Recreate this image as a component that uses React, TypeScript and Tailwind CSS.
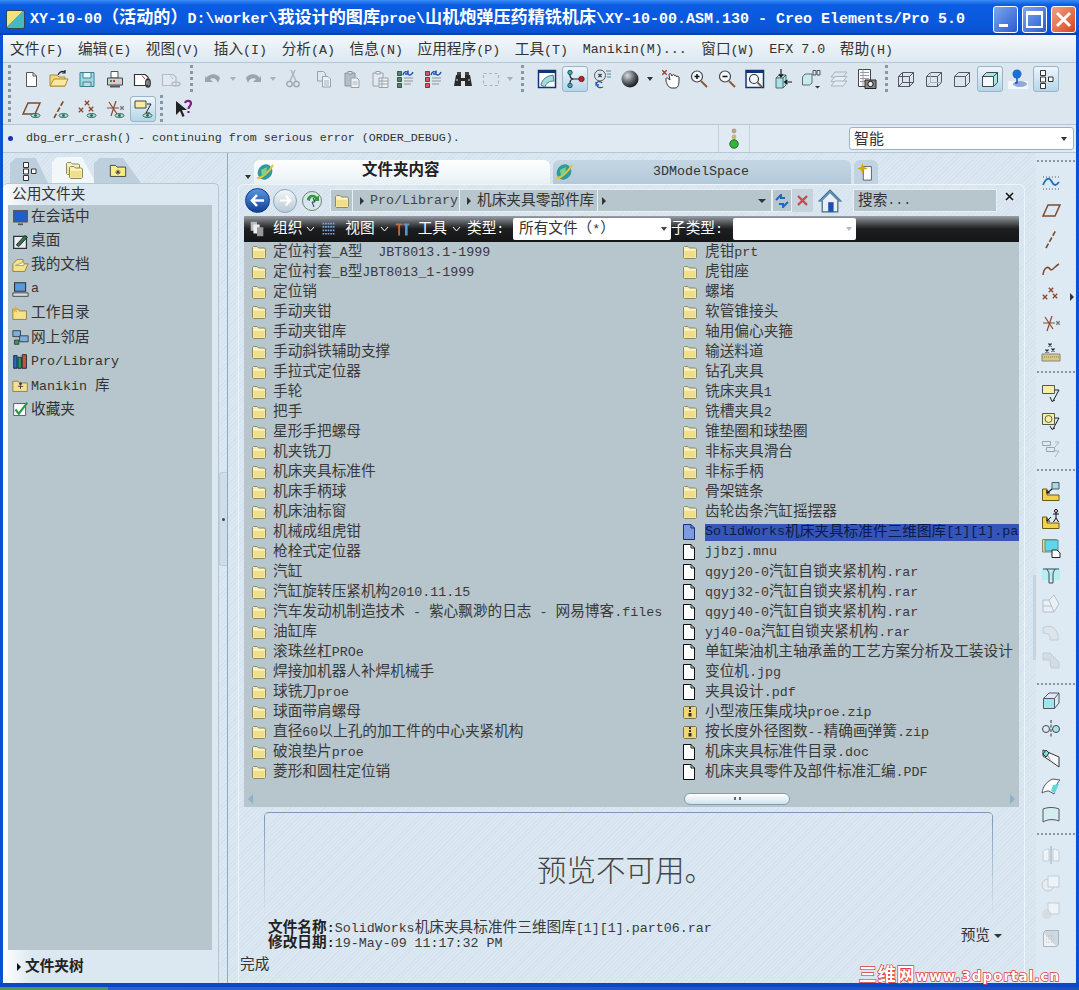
import type { ReactNode } from 'react';

const CJK = /([\u2e80-\u9fff\uff00-\uffef\u3000-\u303f]+)/;

function T({ s, big = 'text-[14.67px]' }: { s: string; big?: string }) {
  return <>{s.split(CJK).map((p, i) => (i % 2 ? <span key={i} className={big}>{p}</span> : p))}</>;
}

function Ic({ children, w = 20, h = 20 }: { children: ReactNode; w?: number; h?: number }) {
  return <svg width={w} height={h} viewBox="0 0 20 20" fill="none" className="block shrink-0">{children}</svg>;
}

const X = ({ x, y, c = '#8a4a2a', r = 2.2 }: { x: number; y: number; c?: string; r?: number }) => (
  <path d={`M${x - r} ${y - r}L${x + r} ${y + r}M${x + r} ${y - r}L${x - r} ${y + r}`} stroke={c} strokeWidth="1.3" />
);
const Eye = () => (
  <g>
    <ellipse cx="14.5" cy="16.5" rx="4.5" ry="2" fill="#bfe3d8" stroke="#2a6a5a" />
    <circle cx="14.5" cy="16.5" r="1.3" fill="#17564a" />
  </g>
);

const Folder = () => (
  <svg width="16" height="14" viewBox="0 0 16 14" className="block shrink-0">
    <path d="M1.5 12.5V2.5L2.5 1.5H6L7.5 3H13.5L14.5 4V12.5L13.5 13.5H2.5Z" fill="#f8efb4" stroke="#8b8b6a" />
    <path d="M2.5 5H13.5V12.5H2.5Z" fill="#f0de8a" />
    <path d="M2.5 5H13.5" stroke="#fffbe0" />
  </svg>
);
const Page = ({ fill = '#fff', stroke = '#111' }: { fill?: string; stroke?: string }) => (
  <svg width="14" height="16" viewBox="0 0 14 16" className="block shrink-0">
    <path d="M1.5.5H9L12.5 4V15.5H1.5Z" fill={fill} stroke={stroke} />
    <path d="M9 .5V4H12.5" fill="none" stroke={stroke} />
  </svg>
);
const Zip = () => (
  <svg width="16" height="14" viewBox="0 0 16 14" className="block shrink-0">
    <path d="M1.5 12.5V2.5L2.5 1.5H13.5L14.5 2.5V12.5L13.5 13.5H2.5Z" fill="#f2d873" stroke="#77704a" />
    <path d="M7 2H9V4H7ZM7 5H9V7H7ZM6.5 8H9.5V11.5H6.5Z" fill="#333" />
  </svg>
);

const Doc = () => <Ic><path d="M5.5 3.5H12L15.5 7V17.5H5.5Z" fill="#fff" stroke="#555" /><path d="M12 3.5V7H15.5" stroke="#555" /></Ic>;
const Open = () => <Ic><path d="M1 17V6H8L10 8H16V17Z" fill="#f2d873" stroke="#a98b3a" /><path d="M1 17L5 10H19L16 17Z" fill="#f9e9a0" stroke="#a98b3a" /><path d="M9 6C11 2 14 2 16 3M16 1V4H13" stroke="#222" strokeWidth="1.2" /></Ic>;
const Save = () => <Ic><path d="M3 3.5H17V17.5H3Z" fill="#9bdbe6" stroke="#3f7f90" /><path d="M6 3.5H14V9H6Z" fill="#eaf8fa" stroke="#3f7f90" /><path d="M6 13H14V17.5H6Z" fill="#c9d5da" stroke="#3f7f90" /></Ic>;
const Print = () => <Ic><path d="M6 2.5H13V9H6Z" fill="#fff" stroke="#555" /><path d="M2.5 9H17.5V16H2.5Z" fill="#d0d0d0" stroke="#444" /><path d="M5 17.5H15" stroke="#555" strokeWidth="2" /><path d="M5 12H7" stroke="#2a9a3a" strokeWidth="2" /><path d="M8 12H10" stroke="#c33" strokeWidth="2" /></Ic>;
const Mail = ({ off = false }: { off?: boolean }) => {
  const c = off ? '#b0bcc6' : '#333';
  return <Ic><path d="M1.5 5.5H12L15 8V16.5H1.5Z" fill={off ? '#e3e9ef' : '#fff'} stroke={c} strokeWidth="1.2" /><path d="M9 6.5L12 10" stroke={off ? c : '#c33'} /><ellipse cx="15" cy={off ? 15 : 14} rx={off ? 4 : 2.2} ry={off ? 2 : 4} fill="none" stroke={c} strokeWidth="1.5" /></Ic>;
};
const Undo = ({ flip = false }: { flip?: boolean }) => (
  <Ic><g transform={flip ? 'matrix(-1 0 0 1 20 0)' : undefined}><path d="M3 9C7 4 14 4 17 9L15 14C14 10 10 8 7 10L10 13H2V6Z" fill="#9aa4ad" /></g></Ic>
);
const Cut = () => <Ic><path d="M12 1L7 12M8 1L13 12" stroke="#aab4bd" strokeWidth="1.4" /><circle cx="6.5" cy="15" r="2.7" stroke="#9aa4ad" strokeWidth="1.3" /><circle cx="13.5" cy="15" r="2.7" stroke="#9aa4ad" strokeWidth="1.3" /></Ic>;
const Copy = () => <Ic><path d="M3.5 2.5H9.5L11.5 4.5V12H3.5Z" fill="#dfe6ec" stroke="#98a2ab" /><path d="M8.5 7.5H14L16.5 10V18H8.5Z" fill="#eef2f5" stroke="#98a2ab" /><path d="M10 12H15M10 14H15M10 16H15" stroke="#aab4bd" /></Ic>;
const Paste = () => <Ic><path d="M3 4H13V17H3Z" fill="#b4bec7" stroke="#8a949d" /><path d="M6 2.5H10V5H6Z" fill="#e3e9ef" stroke="#8a949d" /><path d="M9 9H15L17 11V18.5H9Z" fill="#eef2f5" stroke="#98a2ab" /><path d="M10.5 13H15.5M10.5 15H15.5" stroke="#aab4bd" /></Ic>;
const PasteS = () => <Ic><path d="M3 4H13V17H3Z" fill="#e3e9ef" stroke="#98a2ab" /><path d="M6 2.5H10V5H6Z" fill="#f0f4f7" stroke="#98a2ab" /><path d="M9 9H18V18.5H9ZM9 12H18M9 15H18M12 9V18.5" stroke="#98a2ab" fill="#eef2f5" /></Ic>;
const Regen = ({ c = '#3f8f6a' }: { c?: string }) => (
  <Ic>
    <path d="M2.5 2.5H6.5V6.5H2.5ZM2.5 8.5H6.5V12.5H2.5ZM2.5 14.5H6.5V18.5H2.5Z" fill={c} stroke="#333" strokeWidth=".8" />
    <path d="M9 9H18M9 12H18M9 15H16" stroke="#8a949d" />
    <path d="M8 6C9 2 12 2 13 4M13 1.5V5H10M18 3C17 6 14 7 13 5" stroke="#1d53b0" strokeWidth="1.4" />
  </Ic>
);
const Binoc = () => <Ic><path d="M3 6H8V9H12V6H17L19 17H12V12H8V17H1Z" fill="#2a2a2a" /><path d="M4 3H8V6H4ZM12 3H16V6H12Z" fill="#444" /><path d="M3 11H5M15 11H17" stroke="#ddd" /></Ic>;
const SelBox = () => <Ic><path d="M2.5 4.5H17.5V16.5H2.5Z" stroke="#aab4bd" strokeWidth="1.2" strokeDasharray="3 2.5" /></Ic>;
const Repaint = () => <Ic><path d="M1.5 1.5H18.5V18.5H1.5Z" fill="#fff" stroke="#10367a" strokeWidth="1.5" /><path d="M1.5 1.5H18.5V4H1.5Z" fill="#10367a" /><path d="M4 16C5 10 10 7 16 6L17 12C12 12 9 14 8 18Z" fill="#a7dbe2" stroke="#3f7f90" /></Ic>;
const Tree3 = () => <Ic><circle cx="5" cy="3.5" r="2.2" fill="#3bb0a0" stroke="#135" strokeWidth=".8" /><circle cx="5" cy="16.5" r="2.2" fill="#3bb0a0" stroke="#135" strokeWidth=".8" /><circle cx="16.5" cy="10" r="2.7" fill="#c8202a" stroke="#511" strokeWidth=".8" /><path d="M5 6C5 9 7 10 9 10H14M5 14C5 11 7 10 9 10" stroke="#222" strokeWidth="1.2" /></Ic>;
const Spin = () => <Ic><circle cx="7" cy="6.5" r="5.5" stroke="#555" /><X x={7} y={6.5} c="#333" r={1.6} /><path d="M13 2H18M14 5H18M14 8H18" stroke="#3f8f9f" /><path d="M3 15C4 12 8 12 9 14M3 13V16H6M10 18C8 19 5 19 4 17" stroke="#1d53b0" strokeWidth="1.3" /></Ic>;
const Sphere = () => (
  <svg width="18" height="18" viewBox="0 0 18 18" className="block shrink-0">
    <defs><radialGradient id="sph" cx="35%" cy="30%" r="75%"><stop offset="0" stopColor="#d9dde0" /><stop offset=".55" stopColor="#5d6266" /><stop offset="1" stopColor="#111" /></radialGradient></defs>
    <circle cx="9" cy="9" r="8.5" fill="url(#sph)" />
  </svg>
);
const Hand = () => <Ic><path d="M5 10V12C6 16 8 19 11 19H14C17 19 18 16 18 11V8C17 7 16 7 15.5 8C15.5 6 14 6 13.5 7C13.5 5 11.5 5 11 7L10 5C9 4 8 4.5 8 6L9 11L6.5 9C5.5 8.5 5 9 5 10Z" fill="#fff" stroke="#222" strokeWidth=".9" /><X x={3.5} y={3.5} c="#a33" /></Ic>;
const Zoom = ({ plus = false }: { plus?: boolean }) => <Ic><circle cx="8" cy="7.5" r="5.5" fill="#f4f8fb" stroke="#445" strokeWidth="1.2" /><path d="M5.5 7.5H10.5" stroke="#111" strokeWidth="1.5" />{plus && <path d="M8 5V10" stroke="#111" strokeWidth="1.5" />}<path d="M12 12L18 18" stroke="#8a5a3a" strokeWidth="2" /></Ic>;
const Refit = () => <Ic><path d="M1 1.5H18.5V18.5H1Z" fill="#f2f7fa" stroke="#10367a" strokeWidth="1.5" /><path d="M1 1.5H18.5V4H1Z" fill="#10367a" /><circle cx="9" cy="10" r="4.5" stroke="#334" strokeWidth="1.2" /><path d="M12.5 13.5L17 18" stroke="#8a5a3a" strokeWidth="1.8" /></Ic>;
const CubeArrow = () => <Ic><path d="M3 9L6 6H13V16L10 19H3Z" fill="#a8e3e6" stroke="#445" strokeWidth=".8" /><path d="M3 9H10V19M10 9L13 6" stroke="#445" strokeWidth=".8" /><path d="M8 0V7M6 5L8 8L10 5" stroke="#111" strokeWidth="1.1" /><path d="M19 13H12M14.5 11L11.5 13L14.5 15" stroke="#111" strokeWidth="1.1" /></Ic>;
const AbCube = () => <Ic><path d="M1.5 8L4 5H11V14L8.5 16H1.5Z" fill="#c7ecee" stroke="#667" /><path d="M12 1.5H15V6H12ZM16 1.5H19V6H16Z" stroke="#445" strokeWidth=".9" /><path d="M14 17H19L16.5 19.5Z" fill="#333" /></Ic>;
const Layers = () => <Ic><path d="M6 3H18L14 8H2Z" stroke="#aab4bd" /><path d="M6 7.5H18L14 12.5H2Z" fill="#e5ecf2" stroke="#aab4bd" /><path d="M6 12H18L14 17H2Z" fill="#e5ecf2" stroke="#aab4bd" /></Ic>;
const Cam = () => <Ic><path d="M1.5.5H13.5V17.5H1.5Z" fill="#fff" stroke="#445" /><path d="M3 3.5H12M3 6.5H12M3 9.5H12M3 12.5H8M6 .5V17" stroke="#99a" /><path d="M8 11H19V19.5H8Z" fill="#888" stroke="#222" /><circle cx="13.5" cy="15" r="2.7" fill="#eee" stroke="#111" /></Ic>;
const Wire = ({ v = 0 }: { v?: number }) => <Ic><path d="M2.5 7.5L6.5 3.5H17.5V13.5L13.5 17.5H2.5Z" stroke="#556" /><path d="M2.5 7.5H13.5V17.5M13.5 7.5L17.5 3.5" stroke="#556" />{v < 2 && <path d="M6.5 3.5V13.5H17.5M6.5 13.5L2.5 17.5" stroke={v === 0 ? '#556' : '#a8b2bb'} />}</Ic>;
const Shade = () => <Ic><path d="M2.5 7.5L6.5 3.5H17.5V13.5L13.5 17.5H2.5Z" fill="#a8e6e0" stroke="#445" /><path d="M2.5 7.5H13.5V17.5H2.5Z" fill="#f1fbfa" stroke="#445" /><path d="M13.5 7.5L17.5 3.5" stroke="#445" /></Ic>;
const Ball = () => <Ic><path d="M0 12H20V20H0Z" fill="#f3f7fa" /><ellipse cx="12" cy="15" rx="7" ry="3" fill="#8fa9d8" /><path d="M9 8V14H7" stroke="#1d53b0" strokeWidth="1.5" /><circle cx="9" cy="5" r="4.5" fill="#1a6fd0" /></Ic>;
const TreeNode = () => <Ic><path d="M4.5 1.5H9.5V6.5H4.5ZM4.5 8H9.5V13H4.5ZM4.5 14.5H9.5V19.5H4.5ZM12.5 8H17V12.5H12.5Z" fill="#fff" stroke="#333" /></Ic>;

const Plane = ({ eye = false }: { eye?: boolean }) => <Ic><path d="M2 15L7 4H19L14 15Z" stroke="#7d4b2a" strokeWidth="1.5" />{eye && <Eye />}</Ic>;
const Axis = ({ eye = false }: { eye?: boolean }) => <Ic><path d="M5 19L15 1" stroke="#7d4b2a" strokeWidth="1.6" strokeDasharray="5 2" />{eye && <Eye />}</Ic>;
const Pts = ({ eye = false }: { eye?: boolean }) => <Ic><X x={10} y={4} /><X x={4} y={11} /><X x={14} y={10} />{eye && <Eye />}</Ic>;
const Csys = ({ eye = false }: { eye?: boolean }) => <Ic><path d="M2 9H14M11 2L6 17M4 3L12 15" stroke="#8a4a2a" strokeWidth="1.2" /><X x={17} y={9} c="#777" r={1.7} />{eye && <Eye />}</Ic>;
const DispSel = () => <Ic><path d="M2 2H13V9H2Z" fill="#f6ee9c" stroke="#444" /><path d="M14 5H18L13 14H17" stroke="#222" /><Eye /></Ic>;
const HelpQ = () => <Ic><path d="M3 2V16L7 12L9.5 18L11.5 17L9 11H14Z" fill="#222" /><path d="M12 4C13 1 18 1 18 4.5C18 7 15.5 7 15.5 10M15.5 12V14" stroke="#7d1f80" strokeWidth="2.2" /></Ic>;

const Sketch = () => <Ic><path d="M2 4H18M2 16H18" stroke="#556" strokeDasharray="1 2" /><path d="M2 12C6 3 9 5 11 9C13 13 15 13 18 9" stroke="#1d70b8" strokeWidth="1.8" /></Ic>;
const Curve = () => <Ic><path d="M2 17C3 9 7 8 9 11C11 14 14 8 18 6" stroke="#7d4b2a" strokeWidth="1.5" /></Ic>;
const PtsDim = () => <Ic><X x={9} y={3} c="#222" r={1.5} /><X x={12} y={8} c="#222" r={1.5} /><X x={6} y={9} c="#222" r={1.5} /><path d="M1 12H19V19H1Z" fill="#d9c78a" stroke="#887" /><path d="M1 15H19" stroke="#8a7a4a" strokeDasharray="1 1" /></Ic>;
const Note1 = () => <Ic><path d="M1.5 2.5H13.5V10.5H1.5Z" fill="#f7f0a0" stroke="#555" /><path d="M14 7H18L12 18M9 14L11 18.5L14 17" stroke="#222" /></Ic>;
const Note2 = () => <Ic><path d="M1.5 2.5H13.5V13.5H1.5Z" fill="#f7f0a0" stroke="#555" /><circle cx="7.5" cy="8" r="3.5" stroke="#666" /><path d="M14 7H18L12 18M9 15L11 18.5L14 17" stroke="#222" /></Ic>;
const Note3 = () => <Ic><path d="M1.5 2.5H9.5V6.5H1.5ZM5.5 8.5H13.5V12.5H5.5Z" stroke="#9aa4ad" /><path d="M14 3H18L14 8M14 12H18L14 18" stroke="#aab4bd" /></Ic>;
const LPart = () => <Ic><path d="M1.5 8H6V14H18V19.5H1.5Z" fill="#f2d24a" stroke="#6a5a1a" /><path d="M11 1.5H18V8H11Z" fill="#a4dde0" stroke="#556" /><path d="M11 8L6 12M6 9V12H9" stroke="#111" strokeWidth="1.1" /></Ic>;
const LMan = () => <Ic><path d="M1.5 8H6V14H18V19.5H1.5Z" fill="#f2d24a" stroke="#6a5a1a" /><circle cx="15" cy="2" r="1.5" stroke="#111" /><path d="M15 3.5V9M12 5H18M15 9L12.5 13M15 9L17.5 13" stroke="#111" /><path d="M10 8L6 12M6 9V12H9" stroke="#111" /></Ic>;
const Tint = () => <Ic><path d="M1.5 1.5H15.5V14H1.5Z" fill="#f2e05a" stroke="#887" /><path d="M4 2H17V13H4Z" fill="#5dd8ea" stroke="#5a8aa0" /><path d="M11 12H16L19 15V19.5H11Z" fill="#fff" stroke="#222" /></Ic>;
const Rib = () => <Ic><path d="M1 2H19V14H1Z" fill="#b4f0f2" /><path d="M2 3H18M6 3L8 7V17H12V7L14 3" stroke="#445" /></Ic>;
const Draft = () => <Ic><path d="M2 6H8L13 1L18 10L13 18H2Z" fill="#eaf0f5" stroke="#b5c0ca" /><path d="M8 6L13 18M2 12H10" stroke="#b5c0ca" /></Ic>;
const Round = () => <Ic><path d="M2 6C8 2 15 5 17 13V18H9C10 14 8 11 2 11Z" fill="#dde5ec" stroke="#c2ccd4" /></Ic>;
const Cham = () => <Ic><path d="M2 3H9L18 12V18H10L9 10H2Z" fill="#d3dce3" stroke="#c2ccd4" /></Ic>;
const Mirror = ({ c = '#556' }: { c?: string }) => <Ic><path d="M2.5 7.5H13.5V17.5H2.5Z" fill="#9fe6ea" stroke={c} /><path d="M2.5 7.5L8 2H18V12L13.5 17.5M13.5 7.5L18 2" stroke={c} /></Ic>;
const Move = () => <Ic><circle cx="5" cy="10" r="3.5" stroke="#445" /><circle cx="15" cy="10" r="3.5" fill="#a4e6ea" stroke="#445" /><path d="M10 1V19" stroke="#333" strokeDasharray="3 1.5" /></Ic>;
const Warp = () => <Ic><path d="M2 2L18 9V19L11 14L2 8Z" fill="#f6f9fb" stroke="#333" /><path d="M2 2L7 7L11 14L6 8Z" fill="#9a9a9a" /><path d="M2 6L5 2L8 5L5 9Z" fill="#78e0e6" stroke="#333" /></Ic>;
const Surf = () => <Ic><path d="M1 17C2 10 6 5 12 3L19 4C15 8 14 13 13 18L8 15C5 15 3 16 1 17Z" fill="#fff" stroke="#556" /><path d="M12 9L18 8L14 17L10 15Z" fill="#5fd6dc" /></Ic>;
const Fill = () => <Ic><path d="M2 5C7 3 13 3 18 5V17C13 15 7 15 2 18Z" fill="#d4eef0" stroke="#556" /></Ic>;
const MirOff = () => <Ic><path d="M10 1V19" stroke="#aab4bd" strokeWidth="1.2" /><path d="M8 4C4 4 2 6 2 8V16H8ZM12 4C16 4 18 6 18 8V16H12Z" fill="#eef3f7" stroke="#c2ccd4" /></Ic>;
const Trim = () => <Ic><circle cx="7" cy="12" r="6" fill="#e5ecf2" stroke="#c2ccd4" /><path d="M7 3H18V14H7Z" fill="#eef3f7" stroke="#c2ccd4" /></Ic>;
const Ext = () => <Ic><circle cx="6" cy="14" r="5" fill="#d5dde4" /><path d="M7 3H18V14H10L7 10Z" fill="#eef3f7" stroke="#c2ccd4" /></Ic>;
const Solid = () => <Ic><path d="M2.5 4.5H15.5V18.5H2.5Z" fill="#eef3f7" stroke="#aab4bd" /><path d="M2.5 4.5L4.5 2.5H17.5V16.5L15.5 18.5" fill="#cfd8df" stroke="#aab4bd" /><path d="M5 8H13M5 11H13M5 14H13" stroke="#aab4bd" strokeDasharray="1 1.5" /></Ic>;

function Slot({ children, on = false, w = 'w-[28px]' }: { children: ReactNode; on?: boolean; w?: string }) {
  return (
    <div className={`${w} h-[28px] flex items-center justify-center shrink-0`}>
      {on
        ? <div className="w-[26px] h-[26px] flex items-center justify-center rounded-[3px] border border-[#9ab4c8] bg-linear-to-b from-[#eef5fa] to-[#b4d6ea]">{children}</div>
        : children}
    </div>
  );
}
const Caret = ({ w = 'w-[12px]', c = 'border-t-[#a8b2bb]' }: { w?: string; c?: string }) => (
  <div className={`${w} flex justify-center shrink-0`}><div className={`border-x-[3px] border-t-[4px] border-x-transparent ${c}`} /></div>
);
const Grip = ({ cls = 'mx-[5px]' }: { cls?: string }) => <div className={`w-0 h-[27px] border-l-[3px] border-dotted border-[#8698a8] shrink-0 ${cls}`} />;

const menus = ['文件(F)', '编辑(E)', '视图(V)', '插入(I)', '分析(A)', '信息(N)', '应用程序(P)', '工具(T)', 'Manikin(M)...', '窗口(W)', 'EFX 7.0', '帮助(H)'];

const leftFolders = [
  '定位衬套_A型  JBT8013.1-1999', '定位衬套_B型JBT8013_1-1999', '定位销', '手动夹钳', '手动夹钳库', '手动斜铁辅助支撑', '手拉式定位器', '手轮', '把手',
  '星形手把螺母', '机夹铣刀', '机床夹具标准件', '机床手柄球', '机床油标窗', '机械成组虎钳', '枪栓式定位器', '汽缸', '汽缸旋转压紧机构2010.11.15',
  '汽车发动机制造技术 - 紫心飘渺的日志 - 网易博客.files', '油缸库', '滚珠丝杠PROe', '焊接加机器人补焊机械手', '球铣刀proe', '球面带肩螺母',
  '直径60以上孔的加工件的中心夹紧机构', '破浪垫片proe', '菱形和圆柱定位销',
];
const rightItems: [string, 'folder' | 'file' | 'sel' | 'zip'][] = [
  ['虎钳prt', 'folder'], ['虎钳座', 'folder'], ['螺堵', 'folder'], ['软管锥接头', 'folder'], ['轴用偏心夹箍', 'folder'], ['输送料道', 'folder'], ['钻孔夹具', 'folder'],
  ['铣床夹具1', 'folder'], ['铣槽夹具2', 'folder'], ['锥垫圈和球垫圈', 'folder'], ['非标夹具滑台', 'folder'], ['非标手柄', 'folder'], ['骨架链条', 'folder'], ['齿轮齿条汽缸摇摆器', 'folder'],
  ['SolidWorks机床夹具标准件三维图库[1][1].part06.rar', 'sel'], ['jjbzj.mnu', 'file'], ['qgyj20-0汽缸自锁夹紧机构.rar', 'file'], ['qgyj32-0汽缸自锁夹紧机构.rar', 'file'], ['qgyj40-0汽缸自锁夹紧机构.rar', 'file'],
  ['yj40-0a汽缸自锁夹紧机构.rar', 'file'], ['单缸柴油机主轴承盖的工艺方案分析及工装设计', 'file'], ['变位机.jpg', 'file'], ['夹具设计.pdf', 'file'], ['小型液压集成块proe.zip', 'zip'],
  ['按长度外径图数--精确画弹簧.zip', 'zip'], ['机床夹具标准件目录.doc', 'file'], ['机床夹具零件及部件标准汇编.PDF', 'file'],
];

const MonitorI = () => <Ic w={17} h={17}><path d="M2 2H18V15H2Z" fill="#1d5fd0" stroke="#555" strokeWidth="1.5" /><path d="M7 18H13" stroke="#555" strokeWidth="2" /></Ic>;
const DesktopI = () => <Ic w={17} h={17}><path d="M2 4H17V18H2Z" fill="#eee" stroke="#234" strokeWidth="1.5" /><path d="M5 14L15 3L18 5L8 16Z" fill="#2a7a4a" stroke="#222" /></Ic>;
const DocsI = () => <Ic w={17} h={17}><path d="M1 17V8L6 3H13V8H19L15 17Z" fill="#f6e28a" stroke="#887a3a" /><path d="M4 10L14 6V10H6Z" fill="#fff" stroke="#998" /></Ic>;
const PcI = () => <Ic w={17} h={17}><path d="M3 2H16V12H3Z" fill="#5a9ad8" stroke="#333" strokeWidth="1.3" /><path d="M1 14H19V18H1Z" fill="#ddd" stroke="#333" /></Ic>;
const WorkI = () => <Ic w={17} h={17}><path d="M1 17V5H7L9 7H17V17Z" fill="#f6e28a" stroke="#887a3a" /><path d="M4 1L5 4L8 4.5L5.5 6L6 9L4 7L2 9L2.5 6L0 4.5L3 4Z" fill="#e8b020" /></Ic>;
const NetI = () => <Ic w={17} h={17}><path d="M1 2H10V9H1Z" fill="#7ab0e0" stroke="#333" /><path d="M9 8H19V15H9Z" fill="#7ab0e0" stroke="#333" /><path d="M3 13H8V18H3Z" fill="#3a9a5a" stroke="#333" /></Ic>;
const LibI = () => <Ic w={17} h={17}><path d="M2 3H6V18H2Z" fill="#2a6ac0" stroke="#123" /><path d="M7 5H11V18H7Z" fill="#2a9a5a" stroke="#123" /><path d="M12 2H17V18H12Z" fill="#d05030" stroke="#123" /></Ic>;
const ManI = () => <Ic w={17} h={17}><path d="M1 17V5H7L9 7H18V17Z" fill="#f6e28a" stroke="#887a3a" /><circle cx="10" cy="8" r="1.6" fill="#333" /><path d="M10 10V14M7 11H13" stroke="#333" /></Ic>;
const FavI = () => <Ic w={17} h={17}><path d="M2 3H16V17H2Z" fill="#fff" stroke="#446" /><path d="M4 10L8 15L18 2" stroke="#2a9a4a" strokeWidth="2.5" /></Ic>;

const sideItems: [ReactNode, string][] = [
  [<MonitorI />, '在会话中'], [<DesktopI />, '桌面'], [<DocsI />, '我的文档'], [<PcI />, 'a'], [<WorkI />, '工作目录'], [<NetI />, '网上邻居'], [<LibI />, 'Pro/Library'], [<ManI />, 'Manikin 库'], [<FavI />, '收藏夹'],
];

const Globe = () => (
  <Ic w={20} h={20}><ellipse cx="10" cy="10" rx="7" ry="8" fill="#2f9a9e" transform="rotate(35 10 10)" /><path d="M2 16C6 17 15 9 18 3" stroke="#e8c23a" strokeWidth="2" /><path d="M6 8L12 5L11 12L7 14Z" fill="#7fd08a" /></Ic>
);

const SelectBar = ({ w, text, dim = false }: { w: string; text: string; dim?: boolean }) => (
  <div className={`${w} h-[22px] bg-white rounded-[2px] flex items-center justify-between pl-[6px] pr-[4px] text-[#333] shrink-0`}>
    <span className="whitespace-pre"><T s={text} /></span>
    <div className={`border-x-[3px] border-t-[4px] border-x-transparent ${dim ? 'border-t-[#bbb]' : 'border-t-[#444]'}`} />
  </div>
);

const hatch = 'bg-[repeating-linear-gradient(135deg,#d4e2ed_0px,#d4e2ed_1px,#dbe7f1_1px,#dbe7f1_3px)]';

export default function App() {
  return (
    <div className="relative w-[1079px] h-[990px] overflow-hidden flex flex-col font-['Liberation_Mono','Noto_Sans_CJK_SC',monospace] text-[13.33px] text-[#3a3a3a] bg-[#dbe7f1]">
      {/* title bar */}
      <div className="h-[35px] shrink-0 flex items-center pt-[5px] pl-[6px] pr-[3px] border-b-2 border-[#0a3fb5] bg-[linear-gradient(180deg,#3a8cf5_0px,#0a5ce2_5px,#0a58dc_24px,#0a4fd0_100%)]">
        <div className="w-[19px] h-[19px] mr-[5px] rounded-[2px] border border-[#345] bg-[linear-gradient(135deg,#f5e27a_45%,#46b9c0_46%)] shrink-0" />
        <div className="whitespace-pre text-white font-bold text-[15px]">
          <T s="XY-10-00（活动的）D:\worker\我设计的图库proe\山机炮弹压药精铣机床\XY-10-00.ASM.130 - Creo Elements/Pro 5.0" big="text-[17.1px]" />
        </div>
        <div className="ml-auto flex gap-[4px]">
          <div className="w-[25px] h-[27px] rounded-[3px] border border-white bg-linear-to-br from-[#7ea5ee] to-[#2a5bd0] flex items-end pl-[5px] pb-[5px]"><div className="w-[9px] h-[3px] bg-white" /></div>
          <div className="w-[25px] h-[27px] rounded-[3px] border border-white bg-linear-to-br from-[#7ea5ee] to-[#2a5bd0] flex items-center justify-center"><div className="w-[17px] h-[17px] border-2 border-t-[4px] border-white" /></div>
          <div className="w-[25px] h-[27px] rounded-[3px] border border-white bg-linear-to-br from-[#f0a080] to-[#d8401c] flex items-center justify-center">
            <svg width="17" height="17" viewBox="0 0 17 17"><path d="M2 2L15 15M15 2L2 15" stroke="#fff" strokeWidth="3" /></svg>
          </div>
        </div>
      </div>

      <div className="flex-1 min-h-0 flex flex-col border-x-[3px] border-[#0c50d4]">
        {/* menu */}
        <div className="h-[28px] shrink-0 flex items-center pt-[3px] pl-[7px] gap-[14.6px] border-b border-[#b5c7d6] bg-linear-to-b from-[#f4f8fb] to-[#dce8f1] text-[#333]">
          {menus.map(m => <span key={m} className="whitespace-pre"><T s={m} /></span>)}
        </div>

        {/* toolbars */}
        <div className="h-[62px] shrink-0 flex flex-col justify-center border-b border-[#b5c7d6] bg-[#dbe6ef]">
          <div className="h-[30px] flex items-center">
            <Grip cls="ml-[5px] mr-[6px]" />
            <Slot><Doc /></Slot><Slot><Open /></Slot><Slot><Save /></Slot><Slot><Print /></Slot><Slot><Mail /></Slot><Slot><Mail off /></Slot>
            <Grip cls="ml-[5px] mr-[6px]" />
            <Slot><Undo /></Slot><Caret /><Slot><Undo flip /></Slot><Caret />
            <Slot><Cut /></Slot><div className="w-[3px] shrink-0" /><Slot><Copy /></Slot><Slot><Paste /></Slot><Slot><PasteS /></Slot>
            <Slot w="w-[28px] -ml-[3px]"><Regen /></Slot><Slot><Regen c="#d05a5a" /></Slot><Slot w="w-[28px] ml-[2px]"><Binoc /></Slot>
            <Slot><SelBox /></Slot><Caret w="w-[10px]" />
            <Grip cls="ml-[6px] mr-[9px]" />
            <Slot><Repaint /></Slot><Slot on><Tree3 /></Slot><Slot><Spin /></Slot>
            <Slot w="w-[26px]"><Sphere /></Slot><Caret w="w-[14px]" c="border-t-[#333]" />
            <Slot><Hand /></Slot><Slot><Zoom plus /></Slot><Slot><Zoom /></Slot><Slot><Refit /></Slot><Slot><CubeArrow /></Slot><Slot><AbCube /></Slot><Slot><Layers /></Slot><Slot><Cam /></Slot>
            <Grip cls="mx-[4px]" />
            <Slot><Wire /></Slot><Slot><Wire v={1} /></Slot><Slot><Wire v={2} /></Slot><Slot on><Shade /></Slot><Slot><Ball /></Slot><Slot on><TreeNode /></Slot>
          </div>
          <div className="h-[30px] flex items-center">
            <Grip cls="ml-[5px] mr-[6px]" />
            <Slot><Plane eye /></Slot><Slot><Axis eye /></Slot><Slot><Pts eye /></Slot><Slot><Csys eye /></Slot><Slot on><DispSel /></Slot>
            <Grip cls="ml-[3px] mr-[6px]" />
            <Slot><HelpQ /></Slot>
          </div>
        </div>

        {/* message area */}
        <div className="h-[28px] shrink-0 flex items-center border-b border-[#b5c7d6] bg-[#e0eaf2]">
          <div className="w-[5px] h-[5px] ml-[5px] rounded-full bg-[#1a2fb8] shrink-0" />
          <div className="ml-[13px] w-[692px] whitespace-pre text-[11.67px] text-[#333]">dbg_err_crash() - continuing from serious error (ORDER_DEBUG).</div>
          <div className="w-[32px] self-stretch border-x border-[#c2d1dd] flex items-center justify-center">
            <svg width="10" height="24" viewBox="0 0 10 24"><circle cx="5" cy="4" r="2.4" fill="#bba08a" /><circle cx="5" cy="10" r="2.4" fill="#c9b77a" /><circle cx="5" cy="17" r="4.2" fill="#35b53a" stroke="#1c6a22" /></svg>
          </div>
          <div className="ml-[99px] w-[225px] h-[23px] bg-white border border-[#9fb2c2] rounded-[3px] flex items-center justify-between pl-[4px] pr-[6px]">
            <span className="text-[15px] text-[#333] font-['Noto_Sans_CJK_SC',sans-serif]">智能</span>
            <div className="border-x-[3px] border-t-[4px] border-x-transparent border-t-[#333]" />
          </div>
        </div>

        {/* main */}
        <div className={`flex-1 min-h-0 flex ${hatch}`}>
          {/* left pane */}
          <div className="w-[216px] shrink-0 flex flex-col">
            <div className="h-[30px] shrink-0 flex items-end pl-[7px]">
              <div className="w-[38px] h-[25px] mr-[4px] bg-[#bdcfdd] flex items-center justify-center [clip-path:polygon(0_100%,0_20%,15%_0,68%_0,100%_100%)]"><TreeNode /></div>
              <div className="w-[44px] h-[26px] bg-[#f2f7fa] flex items-center justify-center [clip-path:polygon(0_100%,0_20%,12%_0,68%_0,100%_100%)]">
                <div className="relative w-[18px] h-[18px]"><div className="absolute left-0 top-0"><Folder /></div><div className="absolute left-[3px] top-[4px]"><Folder /></div></div>
              </div>
              <div className="w-[47px] h-[25px] -ml-[2px] bg-[#bdcfdd] flex items-center justify-center [clip-path:polygon(0_100%,0_20%,12%_0,62%_0,100%_100%)]">
                <Ic w={18} h={17}><path d="M1 17V4H7L9 6H19V17Z" fill="#f7ec8a" stroke="#333" /><path d="M10 9V15M7 12H13M8 10L12 14M12 10L8 14" stroke="#333" /></Ic>
              </div>
            </div>
            <div className="flex-1 min-h-0 flex flex-col rounded-t-[5px] border-t border-r border-[#b5c7d6] bg-[linear-gradient(90deg,#fff_0px,#dbe7f1_30px)] pl-[5px] pr-[6px]">
              <div className="h-[21px] shrink-0 flex items-center pl-[4px] text-[#333]"><T s="公用文件夹" /></div>
              <div className="h-[745px] shrink-0 bg-[#b7c5cc]">
                {sideItems.map(([icon, label]) => (
                  <div key={label} className="h-[24.1px] flex items-center pl-[4px] gap-[2px]">
                    {icon}
                    <span className="whitespace-pre text-[#333]"><T s={label} /></span>
                  </div>
                ))}
              </div>
              <div className="flex-1 flex items-center pl-[9px] gap-[4px] font-bold text-[#222]">
                <div className="border-y-[4px] border-l-[4px] border-y-transparent border-l-[#111]" />
                <T s="文件夹树" />
              </div>
            </div>
          </div>

          {/* splitter */}
          <div className="w-[9px] shrink-0 pt-[319px] border-r border-[#93a8ba]">
            <div className="h-[94px] w-[8px] rounded-l-[3px] bg-[#cfdde8] border border-r-0 border-[#bccedc] flex items-center justify-center">
              <div className="w-[3px] h-[3px] rounded-full bg-[#445]" />
            </div>
          </div>

          {/* right pane */}
          <div className="w-[805px] shrink-0 flex flex-col">
            <div className="h-[31px] shrink-0 flex items-end">
              <div className="ml-[13px] w-[13px] flex justify-center mb-[5px]"><div className="border-x-[3px] border-t-[4px] border-x-transparent border-t-[#333]" /></div>
              <div className="w-[296px] h-[24px] rounded-t-[6px] bg-linear-to-b from-white to-[#e8f0f5] flex items-center">
                <div className="ml-[1px]"><Globe /></div>
                <span className="ml-[87px] font-bold text-[#222] text-[15.5px]">文件夹内容</span>
              </div>
              <div className="ml-[3px] w-[298px] h-[24px] rounded-t-[6px] bg-linear-to-b from-[#c4d6e3] to-[#b3c9d9] flex items-center">
                <div className="ml-[1px]"><Globe /></div>
                <span className="ml-[79px] text-[#333]">3DModelSpace</span>
              </div>
              <div className="ml-[3px] w-[24px] h-[24px] rounded-t-[6px] bg-[#c0d3e0] flex items-center justify-center">
                <Ic w={18} h={18}><path d="M7 4H16V19H7Z" fill="#fff" stroke="#556" /><path d="M6 0L7.5 4.5L12 6L7.5 7.5L6 12L4.5 7.5L0 6L4.5 4.5Z" fill="#d8a800" /></Ic>
              </div>
            </div>

            <div className="flex-1 min-h-0 ml-[10px] mr-[8px] pl-[5px] pr-[6px] rounded-t-[6px] border-t border-x border-[#eef4f8] flex flex-col">
              {/* nav row */}
              <div className="h-[31px] shrink-0 flex items-center relative">
                <div className="ml-[1px] w-[25px] h-[25px] rounded-full bg-linear-to-b from-[#5a96e0] to-[#0f3f96] border border-[#123a80] flex items-center justify-center">
                  <svg width="15" height="13" viewBox="0 0 15 13"><path d="M7 1L2 6.5L7 12M2 6.5H14" fill="none" stroke="#fff" strokeWidth="2.6" /></svg>
                </div>
                <div className="ml-[3px] w-[24px] h-[24px] rounded-full bg-linear-to-b from-[#f2f6f9] to-[#b9cad7] border border-[#8fa4b5] flex items-center justify-center">
                  <svg width="13" height="11" viewBox="0 0 15 13"><path d="M8 1L13 6.5L8 12M13 6.5H1" fill="none" stroke="#fff" strokeWidth="2.6" /></svg>
                </div>
                <div className="ml-[5px] w-[20px] h-[20px] rounded-full bg-[#d9e5ee] border border-[#6a8a6a] flex items-center justify-center">
                  <svg width="17" height="17" viewBox="0 0 17 17"><path d="M3 8C3 3 10 1 13 5L15 3V9H9L11 7C9 4 6 5 6 9Z" fill="#2e9a3a" /><path d="M9 6L11 10H8L10 15" stroke="#335" fill="none" /></svg>
                </div>
                <div className="ml-[8px] w-[442px] h-[23px] bg-[#b7c5cc] border border-[#e8f0f5] flex items-center">
                  <div className="w-[22px] h-full border-r border-[#e8f0f5] flex items-center justify-center"><Folder /></div>
                  <div className="w-[17px] flex justify-center"><div className="border-y-[4px] border-l-[4px] border-y-transparent border-l-[#333]" /></div>
                  <div className="w-[90px] h-full border-r border-[#e8f0f5] flex items-center text-[#444]">Pro/Library</div>
                  <div className="w-[17px] flex justify-center"><div className="border-y-[4px] border-l-[4px] border-y-transparent border-l-[#333]" /></div>
                  <div className="w-[121px] h-full border-r border-[#e8f0f5] flex items-center text-[14.67px] whitespace-pre text-[#333]">机床夹具零部件库</div>
                  <div className="w-[12px] flex justify-center"><div className="border-y-[4px] border-l-[4px] border-y-transparent border-l-[#333]" /></div>
                  <div className="ml-auto mr-[5px] border-x-[4px] border-t-[4px] border-x-transparent border-t-[#333]" />
                </div>
                <div className="w-[20px] h-[23px] bg-[#b7c5cc] border border-[#e8f0f5] flex items-center justify-center">
                  <svg width="14" height="14" viewBox="0 0 14 14"><path d="M1 6L6 1V4H10M13 8L8 13V10H4" stroke="#1d6ac0" strokeWidth="2" fill="none" /></svg>
                </div>
                <div className="w-[21px] h-[23px] bg-[#c5d3dc] flex items-center justify-center">
                  <svg width="13" height="13" viewBox="0 0 13 13"><path d="M2 2L11 11M11 2L2 11" stroke="#c84a4a" strokeWidth="2.4" /></svg>
                </div>
                <div className="ml-[5px]">
                  <Ic w={24} h={24}><path d="M10 1L1 10H3.5V19H16.5V10H19Z" fill="#e9eef2" stroke="#3a6a8a" /><path d="M10 1L1 10H3.5L10 3.5L16.5 10H19Z" fill="#5a8ab8" /><path d="M8.5 11H13V19H8.5Z" fill="#1d4fb0" /></Ic>
                </div>
                <div className="ml-[11px] w-[144px] h-[23px] bg-[#b7c5cc] border border-[#e8f0f5] flex items-center pl-[4px] text-[#333] whitespace-pre"><T s="搜索..." /></div>
                <svg width="9" height="9" viewBox="0 0 9 9" className="ml-[8px] mb-[8px]"><path d="M1 1L8 8M8 1L1 8" stroke="#111" strokeWidth="1.5" /></svg>
              </div>

              {/* black command bar */}
              <div className="h-[26px] shrink-0 w-[775px] flex items-center text-white bg-linear-to-b from-[#9aa0a6] via-[#1c1e20] via-50% to-[#141516] pl-[3px]">
                <Ic w={20} h={18}><path d="M3 2H10V12H3Z" fill="#bbb" /><path d="M6 5H13V15H6Z" fill="#eee" /><path d="M10 8H17V18H10Z" fill="#999" /></Ic>
                <span className="ml-[6px] whitespace-pre"><T s="组织" /></span>
                <svg width="9" height="6" viewBox="0 0 9 6" className="ml-[4px]"><path d="M1 1L4.5 5L8 1" stroke="#fff" fill="none" /></svg>
                <div className="ml-[5px]"><Ic w={17} h={17}><path d="M3 3H17M3 7H17M3 11H17M3 15H17" stroke="#7ea5e0" strokeWidth="2" strokeDasharray="2 1" /></Ic></div>
                <span className="ml-[8px] whitespace-pre"><T s="视图" /></span>
                <svg width="9" height="6" viewBox="0 0 9 6" className="ml-[5px]"><path d="M1 1L4.5 5L8 1" stroke="#fff" fill="none" /></svg>
                <div className="ml-[5px]"><Ic w={17} h={17}><path d="M2 3H10V5H7V17H5V5H2Z" fill="#c8703a" /><path d="M11 3H18V5H16V17H13V5H11Z" fill="#5a9ac8" /></Ic></div>
                <span className="ml-[7px] whitespace-pre"><T s="工具" /></span>
                <svg width="9" height="6" viewBox="0 0 9 6" className="ml-[5px]"><path d="M1 1L4.5 5L8 1" stroke="#fff" fill="none" /></svg>
                <span className="ml-[6px] w-[37px] whitespace-pre"><T s="类型:" /></span>
                <div className="ml-[9px]"><SelectBar w="w-[158px]" text="所有文件（*）" /></div>
                <span className="ml-[0px] w-[52px] whitespace-pre"><T s="子类型:" /></span>
                <div className="ml-[10px]"><SelectBar w="w-[123px]" text="" dim /></div>
              </div>

              {/* file list */}
              <div className="h-[565px] shrink-0 w-[775px] bg-[#b7c5cc] flex flex-col overflow-hidden">
                <div className="h-[548px] grid grid-cols-[431px_344px] grid-rows-[repeat(27,20px)] grid-flow-col text-[#3a3a3a]">
                  {leftFolders.map(f => (
                    <div key={f} className="flex items-center pl-[7px] gap-[6px] min-w-0">
                      <Folder />
                      <span className="whitespace-pre"><T s={f} /></span>
                    </div>
                  ))}
                  {rightItems.map(([f, k]) => (
                    <div key={f} className="flex items-center pl-[7px] min-w-0 overflow-hidden">
                      <div className="w-[23px] shrink-0">
                        {k === 'folder' && <Folder />}
                        {k === 'file' && <Page />}
                        {k === 'sel' && <Page fill="#7e9ae0" stroke="#1a2f80" />}
                        {k === 'zip' && <Zip />}
                      </div>
                      <span className={k === 'sel' ? 'whitespace-pre flex-1 bg-[#3556b8] text-[#0d1a4a] h-[17px] flex items-center overflow-hidden' : 'whitespace-pre'}>
                        <T s={f} />
                      </span>
                    </div>
                  ))}
                </div>
                <div className="h-[17px] flex items-center px-[4px]">
                  <div className="border-y-[5px] border-r-[5px] border-y-transparent border-r-[#8fb0cc]" />
                  <div className="ml-[431px] w-[106px] h-[12px] rounded-full border border-[#7f9db5] bg-linear-to-b from-white to-[#d0e2ee] flex items-center justify-center">
                    <div className="w-[7px] h-[3px] border-x-2 border-[#667]" />
                  </div>
                  <div className="ml-auto border-y-[5px] border-l-[5px] border-y-transparent border-l-[#8fb0cc]" />
                </div>
              </div>

              {/* preview */}
              <div className="mt-[5px] ml-[20px] w-[729px] h-[104px] shrink-0 rounded-t-[5px] border-t border-[#7e97b5] bg-[linear-gradient(#7e97b5,transparent),linear-gradient(#7e97b5,transparent)] bg-[length:1px_100%] bg-[position:left_top,right_top] bg-no-repeat flex items-center justify-center">
                <span className="text-[29.5px] -ml-[6px] text-[#444] font-['Noto_Sans_CJK_SC',sans-serif] font-light mt-[8px]">预览不可用。</span>
              </div>
              <div className="h-[33px] shrink-0 ml-[24px] flex items-center w-[735px] mt-[3px]">
                <div className="leading-[15px]">
                  <div className="whitespace-pre h-[15px]"><span className="font-bold text-[#222]"><T s="文件名称:" /></span><T s="SolidWorks机床夹具标准件三维图库[1][1].part06.rar" /></div>
                  <div className="whitespace-pre h-[15px]"><span className="font-bold text-[#222]"><T s="修改日期:" /></span>19-May-09 11:17:32 PM</div>
                </div>
                <span className="ml-auto text-[14.67px] text-[#333]">预览</span>
                <div className="ml-[4px] mr-[1px] border-x-[4px] border-t-[4px] border-x-transparent border-t-[#333]" />
              </div>
              <div className="h-[18px] shrink-0 -ml-[4px] mt-[4px] flex items-center text-[14.67px] text-[#333]">完成</div>
            </div>
          </div>

          {/* right icon strip */}
          <div className="flex-1 flex">
            <div className="w-[3px] shrink-0 self-stretch pt-[422px]"><div className="h-[85px] w-[3px] bg-[#c4d4e0]" /></div>
            <div className="w-[39px] shrink-0 bg-[#dde9f3] flex flex-col items-center pt-[7px]">
              <div className="w-[38px] border-t-2 border-dotted border-[#8698a8] h-[13px]" />
              <div className="flex flex-col items-center gap-[8.2px] -ml-[9px]">
                <Sketch /><Plane /><Axis /><Curve />
                <div className="relative"><Pts /><div className="absolute left-[29px] top-[7px] border-y-[4px] border-l-[4px] border-y-transparent border-l-[#333]" /></div>
                <Csys /><PtsDim />
              </div>
              <div className="w-[38px] border-t-2 border-dotted border-[#8698a8] mt-[9px] mb-[10px]" />
              <div className="flex flex-col items-center gap-[8px] -ml-[9px]"><Note1 /><Note2 /><Note3 /></div>
              <div className="w-[38px] border-t-2 border-dotted border-[#8698a8] mt-[10px] mb-[10px]" />
              <div className="flex flex-col items-center gap-[8.2px] -ml-[9px]"><LPart /><LMan /><Tint /><Rib /><Draft /><Round /><Cham /></div>
              <div className="w-[38px] border-t-2 border-dotted border-[#8698a8] mt-[13px] mb-[6px]" />
              <div className="flex flex-col items-center gap-[8.2px] -ml-[9px]"><Mirror /><Move /><Warp /><Surf /><Fill /></div>
              <div className="w-[38px] border-t-2 border-dotted border-[#8698a8] mt-[9px] mb-[10px]" />
              <div className="flex flex-col items-center gap-[7.6px] -ml-[9px]"><MirOff /><Trim /><Ext /><Solid /></div>
            </div>
          </div>
        </div>
      </div>

      {/* bottom frame edge */}
      <div className="h-[7px] shrink-0 flex flex-col">
        <div className="h-[4px] bg-[#0c47c8]" />
        <div className="h-[3px] flex"><div className="w-[108px] bg-[#4a9a52]" /><div className="flex-1 bg-linear-to-r from-[#2a62d0] to-[#1a4fc0]" /></div>
      </div>

      {/* site watermark stamped on the picture */}
      <div className="absolute right-[19px] bottom-[7px] whitespace-pre font-['DejaVu_Sans','Noto_Sans_CJK_SC',sans-serif] font-bold text-[13.5px] leading-[14px] tracking-[1px] text-white [-webkit-text-stroke:1.5px_#e03a3a] [paint-order:stroke_fill]">
        <span className="text-[18px]">三维网</span>www.3dportal.cn
      </div>
    </div>
  );
}
